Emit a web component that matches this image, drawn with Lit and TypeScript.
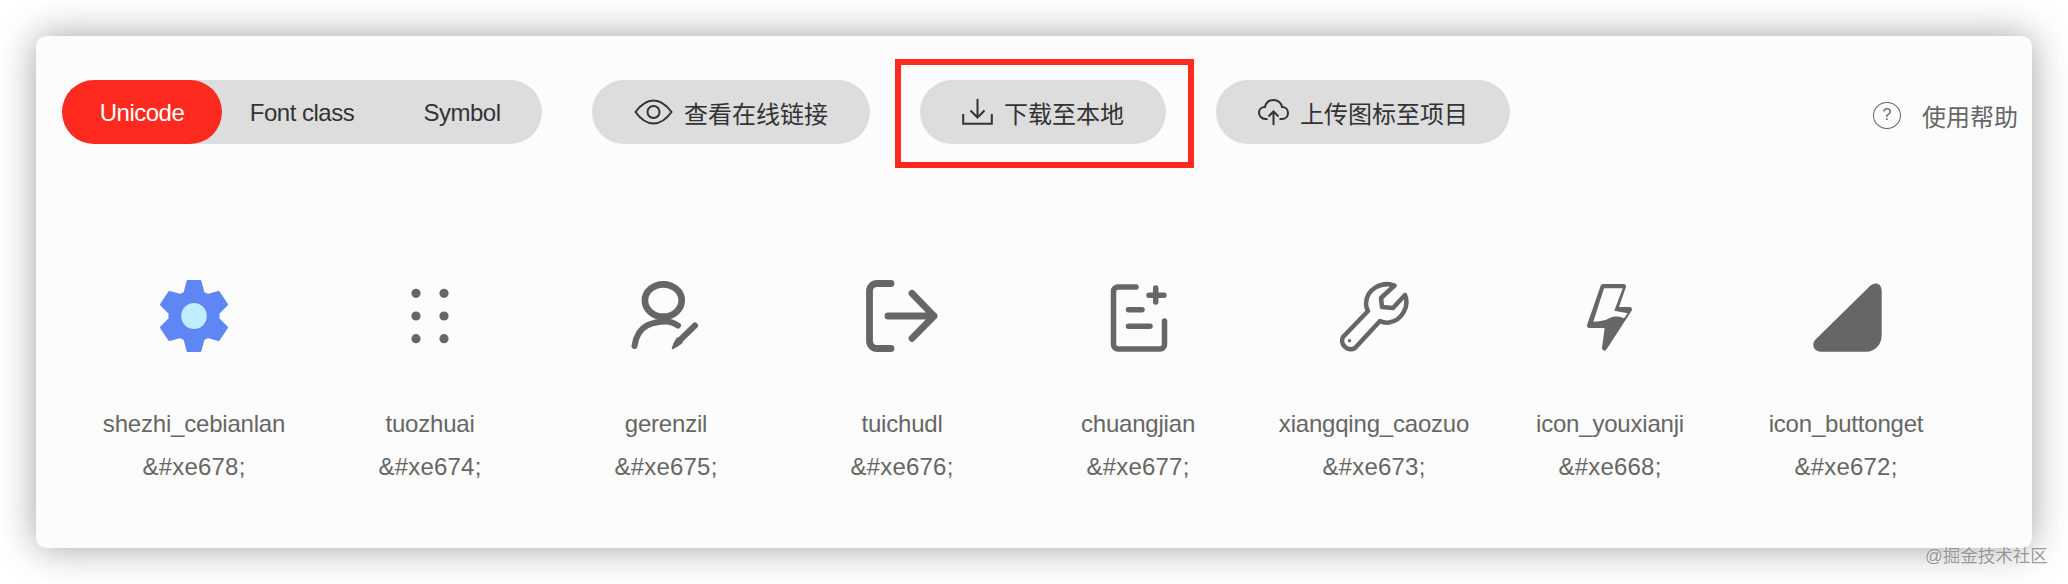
import { LitElement, html, svg, css } from 'lit';
import { customElement, state } from 'lit/decorators.js';

const glyphs: Record<string, any> = {
  gear: svg`
    <path fill="#5f86f5" stroke="#5f86f5" stroke-width="3" stroke-linejoin="round"
      d="M30 1.5H42L45 13L50 15.5L60.500 12.500L68.500 24.500L60 33V39L68.500 47.500L60.500 59.500L50 56.500L45 59L42 70.5H30L27 59L22 56.500L11.500 59.500L3.500 47.500L12 39V33L3.500 24.500L11.500 12.500L22 15.500L27 13Z"/>
    <ellipse cx="36" cy="36" rx="12.8" ry="13" fill="#c0eeff"/>`,
  dots: svg`
    <g fill="#666">
      <circle cx="22" cy="13.3" r="4.6"/><circle cx="50" cy="13.3" r="4.6"/>
      <circle cx="22" cy="36" r="4.6"/><circle cx="50" cy="36" r="4.6"/>
      <circle cx="22" cy="58.7" r="4.6"/><circle cx="50" cy="58.7" r="4.6"/>
    </g>`,
  person: svg`
    <g fill="none" stroke="#666" stroke-linecap="round" stroke-linejoin="round">
      <ellipse cx="33.300" cy="20.500" rx="18.400" ry="16.200" stroke-width="6.700"/>
      <path stroke-width="6" d="M4.500 66C6 56 10 49 17 45.500C22 43 30 41.500 36 41.500C41 41.500 44 43 48 45.500"/>
      <path stroke-width="6" d="M49 61L65 45.500"/>
      <path fill="#666" stroke-width="1.500" d="M42.500 68.500C43.500 63 46 60 47.500 58L52 62.500C49 65 46 67.500 42.500 68.500Z"/>
    </g>`,
  logout: svg`
    <g fill="none" stroke="#666" stroke-linecap="round" stroke-linejoin="round" stroke-width="6.8">
      <path d="M25 3.5H11A7.5 7.5 0 0 0 3.5 11V61A7.5 7.5 0 0 0 11 68.500H25"/>
      <path d="M22 36H68M46 13.300L68 36L46 58.300"/>
    </g>`,
  create: svg`
    <g fill="none" stroke="#666" stroke-linecap="round" stroke-linejoin="round" stroke-width="5.5">
      <path d="M34 7H16A4.500 4.500 0 0 0 11.500 11.500V64.500A4.500 4.500 0 0 0 16 69H58A4.500 4.500 0 0 0 62.500 64.500V41"/>
      <path d="M26.500 29.700H40M26.500 46.300H48M47 15.300H62M53.700 8V22"/>
    </g>`,
  wrench: svg`
    <path fill="none" stroke="#666" stroke-width="4.500" stroke-linejoin="round"
      d="M56.500 5.500C44 1 28 9 28 24C28 27 29 29 30 31L5 57A8.500 8.500 0 0 0 17 68L42 41C44 42 47 43 51 42.500C63 41 72 27 67 15L55 28L44 27L43 18Z"/>
    <circle cx="11.500" cy="60.700" r="1.600" fill="#666"/>`,
  bolt: svg`
    <path fill="#666" stroke="#666" stroke-width="5" stroke-linejoin="round"
      d="M29 6.500H49.500L41.500 29.500H55.500L30.500 68L33.500 45.500H15.500Z"/>
    <path fill="#fcfcfc" d="M30 8.300H48.700L40.300 30.700L53.700 33.300L50 38.300C46 36.500 43 36 39.300 36.700C36 37.500 33 39.500 31 40C27 41 23 41.500 19.300 41.700Z"/>`,
  corner: svg`
    <path fill="#666" d="M58 8C62 3.500 66 3 68 4C70.500 5 71.700 8 71.700 11V55C71.700 65 65 71.700 56 71.700H11C6 71.700 3.300 68 3.300 65C3.300 62.500 4 61 5.500 59.500Z"/>`,
};

const icons = [
  { name: 'shezhi_cebianlan', code: '&#xe678;', glyph: 'gear' },
  { name: 'tuozhuai', code: '&#xe674;', glyph: 'dots' },
  { name: 'gerenzil', code: '&#xe675;', glyph: 'person' },
  { name: 'tuichudl', code: '&#xe676;', glyph: 'logout' },
  { name: 'chuangjian', code: '&#xe677;', glyph: 'create' },
  { name: 'xiangqing_caozuo', code: '&#xe673;', glyph: 'wrench' },
  { name: 'icon_youxianji', code: '&#xe668;', glyph: 'bolt' },
  { name: 'icon_buttonget', code: '&#xe672;', glyph: 'corner' },
];

@customElement('app-root')
export class AppRoot extends LitElement {
  @state() tab = 'Unicode';

  static styles = css`
    :host {
      display: block;
      position: relative;
      height: 584px;
      overflow: hidden;
      padding: 36px;
      box-sizing: border-box;
      background: #fff;
      font-family: 'Liberation Sans', 'Noto Sans CJK SC', sans-serif;
      font-size: 24px;
    }
    .card {
      width: 1996px;
      height: 512px;
      box-sizing: border-box;
      padding: 44px 14px 0 26px;
      background: #fcfcfc;
      border-radius: 10px;
      box-shadow: 0 0 38px rgba(0, 0, 0, 0.37);
    }
    .toolbar { display: flex; gap: 50px; height: 64px; }
    .tabs { display: flex; background: #ddd; border-radius: 32px; }
    .tab {
      width: 160px;
      padding-top: 2px;
      box-sizing: border-box;
      display: flex;
      align-items: center;
      justify-content: center;
      border-radius: 32px;
      color: #333;
      letter-spacing: -0.5px;
    }
    .tab.active { background: #ff2a1f; color: #fff; }
    .btn {
      display: flex;
      align-items: center;
      gap: 11px;
      padding: 0 42px;
      background: #ddd;
      border-radius: 32px;
      color: #333;
    }
    .btn svg { fill: none; stroke: #333; stroke-width: 2; }
    .help {
      margin-left: auto;
      padding-top: 6px;
      display: flex;
      align-items: center;
      gap: 21px;
      color: #666;
    }
    .help-mark {
      width: 28px;
      height: 27px;
      box-sizing: border-box;
      border: 1.5px solid #666;
      border-radius: 50%;
      display: flex;
      align-items: center;
      justify-content: center;
      font-size: 16px;
    }
    .grid {
      display: grid;
      grid-template-columns: repeat(8, 236px);
      margin: 136px 0 0 14px;
    }
    .item { text-align: center; color: #666; line-height: 43px; }
    .item svg { display: block; margin: 0 auto 50px; }
    .name { letter-spacing: -0.2px; }
    .code { letter-spacing: 0.2px; }
    .highlight {
      position: absolute;
      left: 895px;
      top: 59px;
      width: 299px;
      height: 109px;
      box-sizing: border-box;
      border: 6px solid #ff2a1f;
    }
    .watermark {
      position: absolute;
      left: 1925px;
      top: 544px;
      font-size: 17.5px;
      line-height: 24px;
      color: rgba(110, 110, 110, 0.7);
      text-shadow: 0 0 2px rgba(255, 255, 255, 0.8);
    }
  `;

  render() {
    return html`
      <div class="card">
        <div class="toolbar">
          <div class="tabs">
            ${['Unicode', 'Font class', 'Symbol'].map(
              (t) => html`<div class="tab ${t === this.tab ? 'active' : ''}">${t}</div>`
            )}
          </div>
          <div class="btn">
            <svg width="39" height="26" viewBox="0 0 39 26">
              <path d="M1.500 13C8 4 14 1.500 19.500 1.500C25 1.500 31 4 37.500 13C31 22 25 24.500 19.500 24.500C14 24.500 8 22 1.500 13Z"/>
              <circle cx="19.500" cy="13" r="6"/>
            </svg>
            <span>查看在线链接</span>
          </div>
          <div class="btn">
            <svg width="31" height="26" viewBox="0 0 31 26">
              <path d="M1.200 15V24.800H29.800V15"/>
              <path d="M15.500 0V18M8.500 11.500L15.500 18.500L22.500 11.500"/>
            </svg>
            <span>下载至本地</span>
          </div>
          <div class="btn">
            <svg width="31" height="26" viewBox="0 0 31 26">
              <path d="M9.500 20H7.500C3.500 20 1 17 1 13.500C1 10 4 8 7 8C8 3.500 11.500 1 15.500 1C20 1 23.500 4 24 8C27.500 8 30 10.500 30 14C30 17.500 27.500 20 24 20H21.500"/>
              <path d="M15.500 26V12.500M10.500 17.500L15.500 12.500L20.500 17.500"/>
            </svg>
            <span>上传图标至项目</span>
          </div>
          <div class="help">
            <span class="help-mark">?</span>
            <span>使用帮助</span>
          </div>
        </div>
        <div class="grid">
          ${icons.map(
            (i) => html`
              <div class="item">
                <svg width="72" height="72" viewBox="0 0 72 72">${glyphs[i.glyph]}</svg>
                <div class="name">${i.name}</div>
                <div class="code">${i.code}</div>
              </div>
            `
          )}
        </div>
      </div>
      <div class="highlight"></div>
      <div class="watermark">@掘金技术社区</div>
    `;
  }
}
